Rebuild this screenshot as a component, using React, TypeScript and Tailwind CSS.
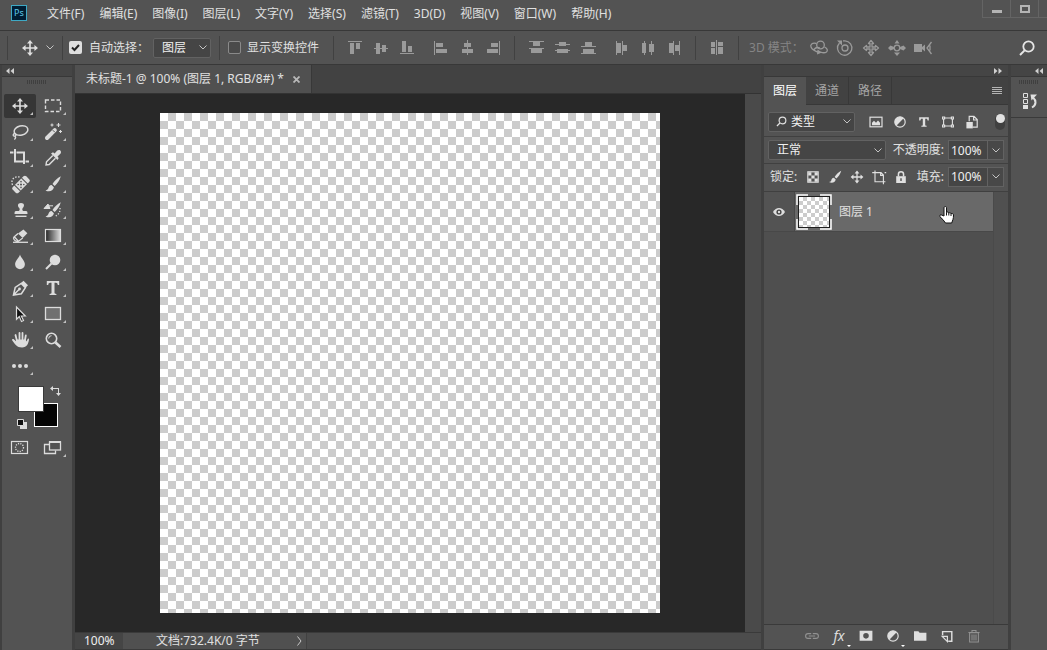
import React from "react";

type IconProps = {
  size?: number;
  className?: string;
  children: React.ReactNode;
};

// All icons are drawn on a 20px grid
function Icon({ size = 20, className = "", children }: IconProps) {
  return (
    <svg
      width={size}
      height={size}
      viewBox="0 0 20 20"
      fill="none"
      stroke="currentColor"
      strokeWidth="1.3"
      aria-hidden="true"
      className={`shrink-0 ${className}`}>
      {children}
    </svg>
  );
}

const fill = { fill: "currentColor", stroke: "none" };

const MOVE = (
  <>
    <path d="M10 4v12M4 10h12" strokeWidth="1.6" />
    <path d="M10 2l3 3.6H7zM10 18l3-3.6H7zM2 10l3.6-3v6zM18 10l-3.6-3v6z" {...fill} />
  </>
);

const SEARCH = (
  <>
    <circle cx="11.5" cy="8.5" r="5.2" strokeWidth="1.8" />
    <path d="M7.6 12.4L3 17" strokeWidth="2" />
  </>
);

const BRUSH = (
  <path
    d="M17.8 2.2c-3.5 1.8-6.5 4.8-8.3 7.8l2.2 2c2.6-2.3 5-5.8 6.1-9.800zM8.6 11c-2 .2-2.800 1.400-3.200 3-.3 1.200-1.200 2-2.900 2.400 3 1.600 7.600 1.200 8.400-3.200z"
    {...fill}
  />
);

const HALF_CIRCLE = (
  <>
    <circle cx="10" cy="10" r="6.5" strokeWidth="1.5" />
    <path d="M14.6 5.4A6.5 6.5 0 0 0 5.4 14.6z" {...fill} />
  </>
);

const TYPE = (
  <path
    d="M3.8 3h12.4v4h-1.4c-.2-1.500-.7-2.200-2-2.200h-1.300v9.900c0 .8.5 1.100 1.900 1.200V17H6.600v-1.100c1.400-.1 1.900-.4 1.900-1.200V4.800H7.200c-1.300 0-1.800.7-2 2.200H3.800z"
    {...fill}
  />
);

const tools = [
  { name: "移动工具", more: true, icon: MOVE },
  {
    name: "矩形选框工具",
    more: true,
    icon: <rect x="2.5" y="4" width="15" height="11.5" strokeWidth="1.4" strokeDasharray="3.500 2" />,
  },
  {
    name: "套索工具",
    more: true,
    icon: (
      <>
        <ellipse cx="11" cy="8.5" rx="7" ry="4.6" transform="rotate(-14 11 8.5)" strokeWidth="1.5" />
        <path d="M5 11.5c-2 0-2.400 2.400-.8 2.600 1.800.2 2.300-1.600 1-2.600M5 14c1 1.300.6 2.600-.7 3.600" />
      </>
    ),
  },
  {
    name: "魔棒工具",
    more: true,
    icon: (
      <>
        <path d="M4 16l7.800-7.800" strokeWidth="4" strokeLinecap="round" />
        <path d="M9.800 8.200l2 2" stroke="#535353" strokeWidth="1" />
        <path d="M9 1.500v3M7.500 3h3M15.500 1v4M13.500 3h4M17.500 8v3M16 9.500h3" strokeWidth="1.1" />
      </>
    ),
  },
  {
    name: "裁剪工具",
    more: true,
    icon: <path d="M5 1v12.500h9M0 4.500h3.500M6.500 4.500H14v11.500M15.500 13.500H19" strokeWidth="2" />,
  },
  {
    name: "吸管工具",
    more: true,
    icon: (
      <>
        <path d="M9.800 7.500L3.500 13.800 3 17l3.200-.5 6.300-6.300" strokeWidth="1.4" />
        <path d="M8 5.500l2-1.200 1.600 1.200 2.600-2.900c2.400-2 5 .8 3.200 3.200l-2.900 2.600 1.200 1.600-1.200 2z" {...fill} />
      </>
    ),
  },
  {
    name: "污点修复画笔工具",
    more: true,
    icon: (
      <>
        <path d="M2.500 11C0.500 6 4 2 9.500 3" strokeDasharray="1.500 1.500" />
        <g transform="rotate(-45 11 10.5)" {...fill}>
          <rect x="1.500" y="6.500" width="19" height="8" rx="2" />
          <path d="M6 6v9M16 6v9" stroke="#535353" strokeWidth="1" />
          <g fill="#535353">
            <circle cx="11" cy="10.500" r="1" />
            <circle cx="9" cy="8.500" r=".8" />
            <circle cx="13" cy="8.500" r=".8" />
            <circle cx="9" cy="12.500" r=".8" />
            <circle cx="13" cy="12.500" r=".8" />
          </g>
        </g>
      </>
    ),
  },
  { name: "画笔工具", more: true, icon: BRUSH },
  {
    name: "仿制图章工具",
    more: true,
    icon: (
      <>
        <path
          d="M11 3c3.500 0 3.700 3.200 1.900 4.800-1 1-.7 3.200.4 3.200H16c1 0 1.500.6 1.500 3h-13c0-2.400.5-3 1.500-3h2.700c1.100 0 1.400-2.200.4-3.200C7.300 6.200 7.500 3 11 3z"
          {...fill}
        />
        <path d="M5.500 16.300h11" strokeWidth="1.400" />
      </>
    ),
  },
  {
    name: "历史记录画笔工具",
    more: true,
    icon: (
      <>
        {BRUSH}
        <path d="M1 8.500l4-4.500 2 4.500zM4 5.800h6" stroke="currentColor" fill="currentColor" strokeWidth="1" />
        <path d="M17 8c.5 4-2 7.500-5.500 8.500" strokeDasharray="1.200 1.600" />
      </>
    ),
  },
  {
    name: "橡皮擦工具",
    more: true,
    icon: (
      <>
        <path d="M8 7.500l5.400-4 4 3.800-4.700 4.700z" {...fill} />
        <path d="M8 7.500L4 11c-1.200 1.200.3 4 2.800 4.400h1.500l4.400-3.400M4.500 11l3.700 4" strokeWidth="1.300" />
        <path d="M3 16.300h15" />
      </>
    ),
  },
  {
    name: "渐变工具",
    more: true,
    icon: (
      <>
        <defs>
          <linearGradient id="tool-gradient">
            <stop offset="0" stopColor="#222" />
            <stop offset="1" stopColor="#ddd" />
          </linearGradient>
        </defs>
        <rect x="2.500" y="3.500" width="15" height="12" strokeWidth="1.2" fill="url(#tool-gradient)" />
      </>
    ),
  },
  {
    name: "模糊工具",
    more: true,
    icon: (
      <path
        d="M10 2.500c.8 3.400 4.900 6 4.900 9.800A4.900 4.900 0 0 1 10 17.200a4.900 4.900 0 0 1-4.900-4.900C5.100 8.500 9.200 5.900 10 2.500z"
        {...fill}
      />
    ),
  },
  {
    name: "减淡工具",
    more: true,
    icon: (
      <>
        <circle cx="12" cy="8" r="5.300" {...fill} />
        <path d="M8.500 11.500L3 17" strokeWidth="2" />
      </>
    ),
  },
  {
    name: "钢笔工具",
    more: true,
    icon: (
      <>
        <path d="M3.500 17l1.700-7.500 6-4 4.200 4.200-4 6zM3.500 17L9 11.500" strokeWidth="1.500" />
        <circle cx="9.500" cy="11" r="1.400" {...fill} />
        <path d="M11 5l2.500-2.300 4.500 4.500-2.500 2.500z" {...fill} />
      </>
    ),
  },
  { name: "横排文字工具", more: true, icon: TYPE },
  {
    name: "路径选择工具",
    more: true,
    icon: (
      <path d="M6.500 3v12.300l2.800-2.700 2.200 4.900 2-1-2.200-4.500h4z" fill="#111" strokeWidth="1.200" />
    ),
  },
  {
    name: "矩形工具",
    more: true,
    icon: <rect x="2.500" y="3.500" width="15" height="12" fill="#707070" strokeWidth="1.300" />,
  },
  {
    name: "抓手工具",
    more: true,
    icon: (
      <>
        <path d="M7 11L5.500 5M9.500 10V3M12.500 10V3M14.800 11L15.800 5.500" strokeWidth="1.800" strokeLinecap="round" />
        <path
          d="M6 9.500h9.500l1.200 2 .8-2.300c.4-1 1.600-.8 1.500.3-.5 3.700-2 8-7 8-5.200 0-7.200-3.600-9.700-7-.8-1.200.6-2 1.500-1.200l2.200 2z"
          {...fill}
        />
      </>
    ),
  },
  {
    name: "缩放工具",
    more: false,
    icon: (
      <>
        <circle cx="8.500" cy="8.500" r="5.200" strokeWidth="1.600" />
        <path d="M5.700 8.500a2.800 2.800 0 0 1 2.800-2.800" strokeWidth="1" />
        <path d="M12.500 12.500l5 4.500" strokeWidth="2.600" />
      </>
    ),
  },
  {
    name: "编辑工具栏",
    more: true,
    icon: (
      <>
        <circle cx="4" cy="10" r="2" {...fill} />
        <circle cx="10" cy="10" r="2" {...fill} />
        <circle cx="16" cy="10" r="2" {...fill} />
      </>
    ),
  },
];

type Action = { name: string; icon: React.ReactNode };

const alignVertical: Action[] = [
  { name: "顶对齐", icon: <path d="M3 3h14v1H3zM5 5h4v11H5zM11 5h4v6h-4z" {...fill} /> },
  { name: "垂直居中对齐", icon: <path d="M3 10h14v1H3zM5 5h4v11H5zM11 7h4v7h-4z" {...fill} /> },
  { name: "底对齐", icon: <path d="M3 15h14v1H3zM5 3h4v11H5zM11 8h4v6h-4z" {...fill} /> },
];

const alignHorizontal: Action[] = [
  { name: "左对齐", icon: <path d="M3 3h1v14H3zM5 5h7v4H5zM5 11h11v4H5z" {...fill} /> },
  { name: "水平居中对齐", icon: <path d="M10 2h1v15h-1zM7 5h7v4H7zM5 11h11v4H5z" {...fill} /> },
  { name: "右对齐", icon: <path d="M16 3h1v14h-1zM8 5h7v4H8zM4 11h11v4H4z" {...fill} /> },
];

const distributeVertical: Action[] = [
  { name: "按顶分布", icon: <path d="M3 3h15v1H3zM7 4h7v4H7zM3 10h15v1H3zM5 11h11v4H5z" {...fill} /> },
  { name: "垂直居中分布", icon: <path d="M3 6h15v1H3zM7 4h7v4H7zM3 12h15v1H3zM5 11h11v4H5z" {...fill} /> },
  { name: "按底分布", icon: <path d="M3 8h15v1H3zM7 4h7v4H7zM3 15h15v1H3zM5 11h11v4H5z" {...fill} /> },
];

const distributeHorizontal: Action[] = [
  { name: "按左分布", icon: <path d="M4 3h1v14H4zM5 5h4v10H5zM10 3h1v14h-1zM11 7h4v6h-4z" {...fill} /> },
  { name: "水平居中分布", icon: <path d="M6 3h1v14H6zM4 5h4v10H4zM13 3h1v14h-1zM11 6h5v8h-5z" {...fill} /> },
  { name: "按右分布", icon: <path d="M9 3h1v14H9zM5 5h4v10H5zM15 3h1v14h-1zM11 7h4v6h-4z" {...fill} /> },
];

const modes3d: Action[] = [
  {
    name: "旋转 3D 对象",
    icon: (
      <>
        <circle cx="11.500" cy="7" r="3.800" />
        <path d="M7.500 5.500C3 4.500 1 6.500 2 9c1 2.500 4.500 4.500 9 5.500M15.500 9c3 1.500 3.500 3.500 2 5-1.500 1-3.500 1-6 .2M5 11.500c1.500-2 3.500-2.500 6-1.500" />
        <path d="M8.500 11.500l4.500 3-5 2z" {...fill} />
      </>
    ),
  },
  {
    name: "滚动 3D 对象",
    icon: (
      <>
        <circle cx="10" cy="10" r="3" />
        <path d="M4.500 5A7.200 7.200 0 1 0 10 2.800" />
        <path d="M2 2.500h5v5z" {...fill} />
        <path d="M8 2.800h2" />
      </>
    ),
  },
  {
    name: "拖动 3D 对象",
    icon: (
      <path
        d="M10 2.500l2.500 3H11V9h3.500V7.500l3 2.500-3 2.500V11H11v3.500h1.500l-2.500 3-2.500-3H9V11H5.500v1.500l-3-2.500 3-2.500V9H9V5.500H7.500z"
        strokeLinejoin="round"
      />
    ),
  },
  {
    name: "滑动 3D 对象",
    icon: (
      <>
        <path d="M10 2l2.500 3.500h-5zM10 18l3-3.500H7zM1 10l2.500-2.500L7 9v2l-3.500 1.500zM19 10l-2.500-2.500L13 9v2l3.500 1.500z" {...fill} />
        <circle cx="10" cy="10" r="2.800" />
      </>
    ),
  },
  {
    name: "缩放 3D 相机",
    icon: (
      <>
        <path d="M1 6h8v3l3-2.500v7L9 11v3H1z" {...fill} />
        <path d="M18.500 4L14 10l4.500 6M17 7.500v5" />
      </>
    ),
  },
];

const filters: Action[] = [
  {
    name: "像素图层滤镜",
    icon: (
      <>
        <rect x="2.500" y="4" width="15" height="12" strokeWidth="1.500" />
        <path d="M5 14V11l2.500-2.500L10 11l2.500-3 2.500 3v3z" {...fill} />
      </>
    ),
  },
  { name: "调整图层滤镜", icon: HALF_CIRCLE },
  {
    name: "文字图层滤镜",
    icon: (
      <path d="M4 4h12v4h-1.500l-.7-2h-2.300v8.300l1.800.4V16H6.700v-1.300l1.800-.4V6H6.200l-.7 2H4z" {...fill} />
    ),
  },
  {
    name: "形状图层滤镜",
    icon: (
      <>
        <path d="M4.500 5h11v10h-11z" strokeWidth="1.400" />
        <path d="M2.500 3h4v4h-4zM13.500 3h4v4h-4zM2.500 13h4v4h-4zM13.500 13h4v4h-4z" {...fill} />
        <path d="M4 4.500h1v1H4zM15 4.500h1v1h-1zM4 14.500h1v1H4zM15 14.500h1v1h-1z" fill="#535353" stroke="none" />
      </>
    ),
  },
  {
    name: "智能对象滤镜",
    icon: (
      <>
        <path d="M6.500 9V3h6l4 4v9.500H11M12 3v4.500h4.500" strokeWidth="1.500" />
        <path d="M3 10h8v8H3z" {...fill} />
      </>
    ),
  },
];

const locks: Action[] = [
  {
    name: "锁定透明像素",
    icon: (
      <>
        <rect x="3.500" y="3.500" width="13" height="13" strokeWidth="1.400" />
        <path d="M4 4h4v4H4zM12 4h4v4h-4zM8 8h4v4H8zM4 12h4v4H4zM12 12h4v4h-4z" {...fill} />
      </>
    ),
  },
  { name: "锁定图像像素", icon: BRUSH },
  { name: "锁定位置", icon: MOVE },
  {
    name: "防止在画板内外自动嵌套",
    icon: <path d="M5 2v14h13M1.500 4.500h11l3 3V19M12 4v4h3.500M17 4.500h2" strokeWidth="1.400" />,
  },
  {
    name: "锁定全部",
    icon: (
      <>
        <path d="M4 9h12v8.500H4z" {...fill} />
        <path d="M6.800 9.500V6.500a3.200 3.200 0 0 1 6.400 0v3" strokeWidth="1.900" />
        <path d="M10 11.500v3.500" stroke="#535353" strokeWidth="1.800" />
      </>
    ),
  },
];

const footerActions = [
  {
    name: "链接图层",
    dim: true,
    more: false,
    icon: <path d="M9 7H5a3 3 0 0 0 0 6h4M11 7h4a3 3 0 0 1 0 6h-4M6 10h8" strokeWidth="1.400" />,
  },
  { name: "添加图层样式", dim: false, more: true, icon: null },
  {
    name: "添加图层蒙版",
    dim: false,
    more: false,
    icon: (
      <path
        fillRule="evenodd"
        d="M2 3.500h16v12.500H2zM10 6.300a3.500 3.500 0 1 0 0 7 3.500 3.500 0 0 0 0-7z"
        {...fill}
      />
    ),
  },
  { name: "创建新的填充或调整图层", dim: false, more: true, icon: HALF_CIRCLE },
  { name: "创建新组", dim: false, more: false, icon: <path d="M2.500 4h5.500l1.500 2H18v10H2.500z" {...fill} /> },
  {
    name: "创建新图层",
    dim: false,
    more: false,
    icon: (
      <>
        <path d="M4.500 9V4.500h11.500v12h-4.500" strokeWidth="1.800" />
        <path d="M4 10.500h6.500V17z" strokeWidth="1.500" />
      </>
    ),
  },
  {
    name: "删除图层",
    dim: true,
    more: false,
    icon: <path d="M4.500 6h11v11.500h-11zM3 5.500h14M7.500 5.500V3h5v2.500M7.500 8v7.500M10 8v7.500M12.500 8v7.500" strokeWidth="1.300" />,
  },
];

const menus = [
  "文件(F)",
  "编辑(E)",
  "图像(I)",
  "图层(L)",
  "文字(Y)",
  "选择(S)",
  "滤镜(T)",
  "3D(D)",
  "视图(V)",
  "窗口(W)",
  "帮助(H)",
];

function Chevron() {
  return (
    <svg width="8" height="5" viewBox="0 0 8 5" fill="none" stroke="#c4c4c4" aria-hidden="true">
      <path d="M.5.500L4 4 7.500.500" />
    </svg>
  );
}

function Arrows({ flip = false }: { flip?: boolean }) {
  return (
    <svg
      width="8"
      height="6"
      viewBox="0 0 8 6"
      fill="#d0d0d0"
      aria-hidden="true"
      className={flip ? "rotate-180" : ""}>
      <path d="M3.500 0v6L0 3zM8 0v6L4.500 3z" />
    </svg>
  );
}

function Separator() {
  return <div className="h-6 w-px shrink-0 bg-[#414141]" />;
}

function Grip() {
  return (
    <div className="mx-auto h-1 w-5 bg-[repeating-linear-gradient(90deg,#3f3f3f_0_1px,transparent_1px_2px)]" />
  );
}

function ActionGroup({ items }: { items: Action[] }) {
  return (
    <div className="flex">
      {items.map((item) => (
        <button key={item.name} title={item.name} className="flex w-[26px] justify-center">
          <Icon>{item.icon}</Icon>
        </button>
      ))}
    </div>
  );
}

type SelectBoxProps = {
  label: string;
  value: string;
  className: string;
  icon?: React.ReactNode;
};

function SelectBox({ label, value, className, icon }: SelectBoxProps) {
  return (
    <div className={`grid h-5 items-center rounded-xs border border-[#626262] bg-[#454545] ${className}`}>
      {icon && <div className="col-start-1 row-start-1 pl-1.5">{icon}</div>}
      <select
        aria-label={label}
        defaultValue={value}
        className={`col-start-1 row-start-1 h-full w-full appearance-none text-[#f0f0f0] outline-none ${icon ? "pl-[22px]" : "pl-2"}`}>
        <option>{value}</option>
      </select>
      <div className="pointer-events-none col-start-1 row-start-1 justify-self-end pr-[3px]">
        <Chevron />
      </div>
    </div>
  );
}

function PercentField({ id, label }: { id: string; label: string }) {
  return (
    <div className="flex items-center">
      <label htmlFor={id} className="pr-1">
        {label}
      </label>
      <input
        id={id}
        defaultValue="100%"
        className="h-5 w-10 border border-[#626262] bg-[#454545] px-0.5 text-[#f0f0f0] outline-none"
      />
      <button
        title={`${label}滑块`}
        className="flex h-5 w-4 items-center justify-center border border-l-0 border-[#626262] bg-[#484848]">
        <Chevron />
      </button>
    </div>
  );
}

function MenuBar() {
  return (
    <header className="flex h-[31px] shrink-0 items-start border-b border-[#383838]">
      <div className="mt-[5px] ml-[11px] flex h-4 w-4 items-center justify-center border border-[#3fa9c4] bg-[#001d33] text-[9px] text-[#5fc8e8]">
        Ps
      </div>
      <nav className="ml-5 flex h-7 flex-1 items-center gap-[15px] whitespace-nowrap">
        {menus.map((menu) => (
          <button key={menu}>{menu}</button>
        ))}
      </nav>
      <div className="flex h-[18px] border-b border-[#646464]">
        <button title="最小化" className="flex w-7 items-center justify-center border-l border-[#646464]">
          <span className="mt-1.5 h-[3px] w-2.5 bg-[#b4b4b4]" />
        </button>
        <button title="最大化" className="flex w-7 items-center justify-center border-l border-[#646464]">
          <span className="h-2 w-2.5 border-2 border-[#b4b4b4]" />
        </button>
        <button title="关闭" className="w-[9px] border-l border-[#646464]" />
      </div>
    </header>
  );
}

function OptionsBar() {
  return (
    <div className="flex h-[34px] shrink-0 items-center border-b border-[#383838] pl-[7px] whitespace-nowrap">
      <Separator />
      <button title="移动工具" className="ml-2 flex items-center gap-1.5 pl-1">
        <Icon>{MOVE}</Icon>
        <Chevron />
      </button>
      <div className="mr-1.5 ml-2">
        <Separator />
      </div>
      <label className="flex items-center gap-[7px]">
        <span className="grid place-items-center">
          <input
            type="checkbox"
            defaultChecked
            className="peer col-start-1 row-start-1 h-[13px] w-[13px] appearance-none rounded-xs bg-[#dedede]"
          />
          <svg
            width="9"
            height="8"
            viewBox="0 0 9 8"
            fill="none"
            stroke="#222"
            strokeWidth="2"
            className="pointer-events-none col-start-1 row-start-1">
            <path d="M1 3.500L3.500 6 8 1" />
          </svg>
        </span>
        自动选择：
      </label>
      <SelectBox label="自动选择对象" value="图层" className="ml-1 w-[58px]" />
      <div className="mx-2">
        <Separator />
      </div>
      <label className="flex items-center gap-1.5">
        <input
          type="checkbox"
          className="h-[13px] w-[13px] appearance-none rounded-xs border border-[#8a8a8a] bg-[#4a4a4a]"
        />
        显示变换控件
      </label>
      <div className="flex items-center gap-2 pl-3.5 text-[#9a9a9a]">
        <Separator />
        <ActionGroup items={alignVertical} />
        <ActionGroup items={alignHorizontal} />
        <Separator />
        <ActionGroup items={distributeVertical} />
        <ActionGroup items={distributeHorizontal} />
        <Separator />
        <ActionGroup
          items={[
            {
              name: "自动对齐图层",
              icon: <path d="M4 4h4v5H4zM4 10h4v6H4zM9 2h1v15H9zM11 4h5v4h-5zM11 9h5v7h-5z" {...fill} />,
            },
          ]}
        />
        <Separator />
        <span className="w-[51px] pl-0.5 text-[#858585]">3D 模式：</span>
        <ActionGroup items={modes3d} />
      </div>
      <button title="搜索" className="mr-2.5 ml-auto text-[#e6e6e6]">
        <Icon>{SEARCH}</Icon>
      </button>
    </div>
  );
}

function Toolbar() {
  return (
    <aside className="flex w-[75px] shrink-0 flex-col border-r-3 border-l-2 border-[#404040] bg-[#535353]">
      <div className="flex h-3 items-center border-b border-[#383838] bg-[#454545] pl-1">
        <Arrows />
      </div>
      <div className="pt-[3px] pb-2.5">
        <Grip />
      </div>
      <div className="grid grid-cols-[32px_32px] gap-x-px gap-y-0.5 pl-0.5 text-[#dcdcdc]">
        {tools.map((tool, i) => (
          <button
            key={tool.name}
            title={tool.name}
            className={`relative flex h-6 items-center justify-center rounded-xs ${i === 0 ? "bg-[#363636]" : ""}`}>
            <Icon>{tool.icon}</Icon>
            {tool.more && <Corner />}
          </button>
        ))}
      </div>

      {/* Foreground / background colours */}
      <div className="relative mt-2 ml-3.5 h-[46px] w-11">
        <button title="设置背景色" className="absolute top-[17px] left-[18px] h-6 w-6 border border-white bg-[#050505]" />
        <button title="设置前景色" className="absolute top-0 left-0.5 h-[26px] w-[26px] border border-[#3a3a3a] bg-white" />
        <button title="切换前景色和背景色" className="absolute top-0 left-[34px] text-[#dcdcdc]">
          <svg width="11" height="10" viewBox="0 0 11 10" fill="currentColor">
            <path d="M0 2.500L3 0v2h6v5h2l-2.500 3L6 7h2V3H3v2z" />
          </svg>
        </button>
        <button title="默认前景色和背景色" className="absolute top-[33px] left-px">
          <svg width="10" height="10" viewBox="0 0 10 10">
            <path d="M3 3h7v7H3z" fill="#dcdcdc" />
            <path d="M.5.500h6v6h-6z" fill="#111" stroke="#dcdcdc" />
          </svg>
        </button>
      </div>

      <div className="mt-1 grid grid-cols-[32px_32px] gap-x-px pl-0.5 text-[#dcdcdc]">
        <button title="以快速蒙版模式编辑" className="flex h-6 items-center justify-center">
          <Icon>
            <rect x="1.500" y="3.500" width="16" height="12" strokeWidth="1.200" />
            <circle cx="9.500" cy="9.500" r="4" strokeDasharray="1.200 1.200" />
          </Icon>
        </button>
        <button title="更改屏幕模式" className="relative flex h-6 items-center justify-center">
          <Icon>
            <path d="M6.500 6.500h-5v9h11v-3" strokeWidth="1.300" />
            <rect x="6.500" y="4" width="11" height="8" strokeWidth="1.300" />
            <path d="M6 4h12" strokeWidth="2" />
          </Icon>
          <Corner />
        </button>
      </div>
    </aside>
  );
}

function Corner() {
  return (
    <svg width="3" height="3" viewBox="0 0 3 3" fill="#c0c0c0" className="absolute right-[3px] bottom-[3px]">
      <path d="M3 0v3H0z" />
    </svg>
  );
}

function Workspace() {
  return (
    <main className="flex min-w-0 flex-1 flex-col">
      <div className="flex h-[29px] shrink-0 border-b border-[#333] bg-[#424242]">
        <div className="flex items-center gap-[9px] border-r border-[#383838] bg-[#505050] pr-[11px] pl-[11px] whitespace-nowrap">
          <span>未标题-1 @ 100% (图层 1, RGB/8#) *</span>
          <button title="关闭文档" className="text-[#b8b8b8]">
            <svg width="7" height="7" viewBox="0 0 7 7" fill="none" stroke="currentColor" strokeWidth="1.800">
              <path d="M.5.500l6 6M6.500.500l-6 6" />
            </svg>
          </button>
        </div>
      </div>
      <div className="flex min-h-0 flex-1">
        <div className="flex min-w-0 flex-1 items-center justify-center overflow-hidden bg-[#282828]">
          <div className="aspect-square w-[500px] shrink-0 bg-[conic-gradient(#ccc_25%,#fff_0_50%,#ccc_0_75%,#fff_0)] bg-[length:16px_16px]" />
        </div>
        <div className="w-4 bg-[#4a4a4a]" />
      </div>
      <footer className="flex h-[18px] shrink-0 border-y border-[#3a3a3a] bg-[#4c4c4c]">
        <input
          aria-label="缩放比例"
          defaultValue="100%"
          className="w-12 bg-[#454545] pl-[9px] text-[#f0f0f0] outline-none"
        />
        <button className="flex w-[184px] items-center justify-between border-r border-[#414141] bg-[#505050] pr-1 pl-[33px] leading-4">
          <span>文档:732.4K/0 字节</span>
          <svg width="5" height="10" viewBox="0 0 5 10" fill="none" stroke="#c8c8c8">
            <path d="M.5.500L4 5 .5 9.500" />
          </svg>
        </button>
      </footer>
    </main>
  );
}

function LayersPanel() {
  return (
    <section className="flex w-[250px] shrink-0 flex-col border-x-3 border-[#404040]">
      <div className="flex h-3 shrink-0 items-center justify-end border-b border-[#383838] bg-[#454545] pr-1.5">
        <Arrows flip />
      </div>
      <div className="flex h-7 shrink-0 bg-[#424242]">
        <button className="w-[42px] bg-[#535353] text-white">图层</button>
        <button className="w-[43px] border-r border-b border-[#383838] text-[#a5a5a5]">通道</button>
        <button className="w-[43px] border-r border-b border-[#383838] text-[#a5a5a5]">路径</button>
        <div className="flex flex-1 items-center justify-end border-b border-[#383838] pr-1.5">
          <button title="面板菜单">
            <svg width="10" height="8" viewBox="0 0 10 8" fill="#b4b4b4">
              <path d="M0 0h10v1H0zM0 2h10v1H0zM0 4h10v1H0zM0 6h10v1H0z" />
            </svg>
          </button>
        </div>
      </div>

      {/* Filter row */}
      <div className="flex h-8 shrink-0 items-center border-b border-[#404040] pt-0.5 pl-1">
        <SelectBox label="图层过滤" value="类型" className="w-[87px]" icon={<Icon size={13}>{SEARCH}</Icon>} />
        <div className="ml-[13px] flex gap-2">
          {filters.map((item) => (
            <button key={item.name} title={item.name}>
              <Icon size={16}>{item.icon}</Icon>
            </button>
          ))}
        </div>
        <button
          role="switch"
          aria-checked="true"
          title="打开或关闭图层过滤"
          className="mr-[3px] ml-auto flex h-4 w-2.5 items-start justify-center rounded-full bg-[#404040]">
          <span className="h-[9px] w-[9px] rounded-full bg-[#e2e2e2]" />
        </button>
      </div>
      <div className="flex h-[27px] shrink-0 items-center justify-between border-b border-[#404040] px-1">
        <SelectBox label="混合模式" value="正常" className="w-[118px]" />
        <PercentField id="opacity" label="不透明度:" />
      </div>
      <div className="flex h-7 shrink-0 items-center border-b border-[#404040] pr-1 pb-0.5 pl-1.5">
        <span>锁定:</span>
        <div className="ml-2 flex flex-1 gap-1.5">
          {locks.map((item) => (
            <button key={item.name} title={item.name}>
              <Icon size={16}>{item.icon}</Icon>
            </button>
          ))}
        </div>
        <PercentField id="fill" label="填充:" />
      </div>

      {/* Layer list */}
      <div className="flex min-h-0 flex-1 bg-[#4f4f4f]">
        <ul className="flex-1">
          <li className="relative flex h-10 border-b border-[#484848]">
            <button
              title="指示图层可见性"
              className="flex w-[31px] items-center justify-center border-r border-[#484848] bg-[#535353]">
              <svg width="12" height="8" viewBox="0 0 12 8">
                <path d="M0 4C3-1.300 9-1.300 12 4 9 9.300 3 9.300 0 4z" fill="#dedede" />
                <circle cx="6" cy="4" r="2.600" fill="#444" />
                <circle cx="6" cy="4" r="1.200" fill="#dedede" />
              </svg>
            </button>
            <button className="flex flex-1 items-center gap-[7px] bg-[#696969] pl-px">
              <span className="grid place-items-center">
                <svg
                  width="36"
                  height="36"
                  viewBox="0 0 36 36"
                  fill="none"
                  stroke="#fff"
                  strokeWidth="1.500"
                  className="col-start-1 row-start-1">
                  <path d="M12 1H1v10M24 1h11v10M12 35H1V25M24 35h11V25" />
                </svg>
                <span className="col-start-1 row-start-1 h-8 w-8 border border-[#1e1e1e] bg-[conic-gradient(#ccc_25%,#fff_0_50%,#ccc_0_75%,#fff_0)] bg-[length:8px_8px]" />
              </span>
              图层 1
            </button>
            {/* Hand pointer */}
            <svg
              width="16"
              height="18"
              viewBox="0 0 16 18"
              className="pointer-events-none absolute top-3.5 right-[38px]">
              <path
                d="M5 10V2c0-2 2.500-2 2.500 0v4.500c.8-.8 2-.5 2.300.5.800-.6 1.900-.3 2.200.7 1-.5 2.500 0 2.500 1.300 0 4-.8 5-1.800 8H6.500C5 14.500 3 12.500 1 10.800c-1-1 .3-2.300 1.500-1.800z"
                fill="#fff"
                stroke="#111"
              />
              <path d="M7.500 6.500v3M9.800 7v2.500M12 7.700V10" stroke="#111" />
            </svg>
          </li>
        </ul>
        <div className="w-[15px] border-l border-[#4a4a4a] bg-[#505050]" />
      </div>

      <div className="flex h-[26px] shrink-0 items-center justify-center border-y border-[#3a3a3a] pr-4 pb-0.5 pl-[30px]">
        {footerActions.map((action) => (
          <button
            key={action.name}
            title={action.name}
            className={`relative flex h-6 w-[27px] items-center justify-center ${action.dim ? "text-[#919191]" : "text-[#dedede]"}`}>
            {action.icon ? (
              <Icon size={16}>{action.icon}</Icon>
            ) : (
              <span className="text-[14px] leading-4 italic">fx</span>
            )}
            {action.more && (
              <svg width="4" height="2" viewBox="0 0 4 2" fill="#fff" className="absolute right-0.5 bottom-px">
                <path d="M0 0h4L2 2z" />
              </svg>
            )}
          </button>
        ))}
      </div>
    </section>
  );
}

function HistoryDock() {
  return (
    <aside className="flex w-9 shrink-0 flex-col">
      <div className="flex h-3 items-center justify-end border-b border-[#383838] bg-[#454545] pr-1">
        <Arrows />
      </div>
      <div className="flex flex-col border-b border-[#3a3a3a] pt-[3px] pb-1.5">
        <Grip />
        <button title="历史记录" className="mt-[7px] flex h-5 items-center justify-center pl-0.5">
          <svg width="16" height="18" viewBox="0 0 16 18" fill="none" stroke="#e0e0e0">
            <path d="M1.500 1.500h4v4h-4zM1.500 7.500h4v4h-4z" />
            <path d="M1 13h5v4H1z" fill="#e0e0e0" stroke="none" />
            <path d="M10 15.500c4.500-2.500 4.500-7 1-10" strokeWidth="2" />
            <path d="M8.500 2.500H15L9.500 8.500z" fill="#e0e0e0" stroke="none" />
          </svg>
        </button>
      </div>
    </aside>
  );
}

export default function App() {
  return (
    <div className="flex h-screen flex-col overflow-hidden bg-[#535353] font-['Noto_Sans','Noto_Sans_CJK_SC',sans-serif] text-[12px] leading-4 text-[#e0e0e0]">
      <MenuBar />
      <OptionsBar />
      <div className="flex min-h-0 flex-1">
        <Toolbar />
        <Workspace />
        <LayersPanel />
        <HistoryDock />
      </div>
    </div>
  );
}
